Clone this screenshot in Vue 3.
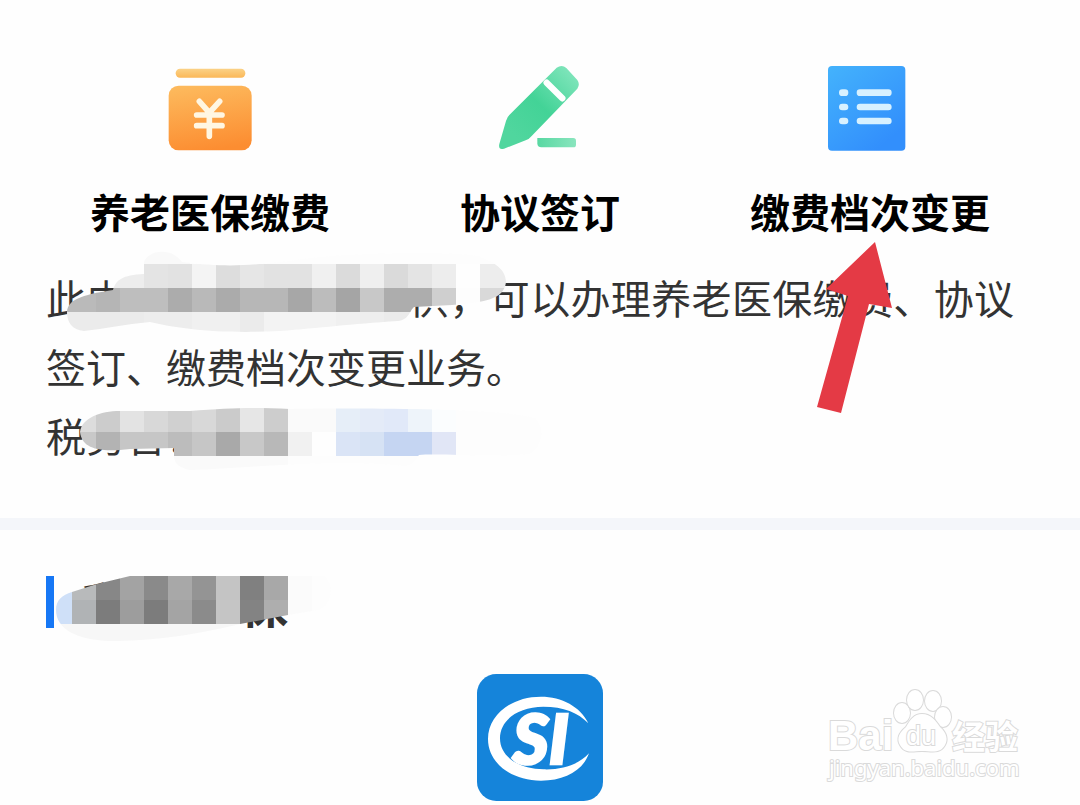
<script setup>
const cells = (y, h, list) => list.map(([x, w, fill]) => ({ x, y, w, h, fill }))

const firstMosaic = [
  ...cells(248, 16, [[130, 60, '#f9f9f9'], [190, 330, '#fdfdfd']]),
  ...cells(264, 24, [
    [60, 84, '#ededed'], [144, 24, '#e4e4e4'], [168, 24, '#e2e2e2'], [192, 24, '#f4f4f4'],
    [216, 24, '#dddddd'], [240, 24, '#e6e6e6'], [264, 48, '#e2e2e2'], [312, 24, '#f0f0f0'],
    [336, 24, '#dbdbdb'], [360, 24, '#efefef'], [384, 24, '#dadada'], [408, 24, '#e4e4e4'],
    [432, 24, '#ededed'], [456, 24, '#fefefe'], [480, 30, '#ededed'],
  ]),
  ...cells(288, 24, [
    [60, 36, '#bababa'], [96, 24, '#b5b5b5'], [120, 48, '#bebebe'], [168, 24, '#acacac'],
    [192, 24, '#b9b9b9'], [216, 24, '#ababab'], [240, 48, '#b7b7b7'], [288, 24, '#a7a7a7'],
    [312, 24, '#bcbcbc'], [336, 24, '#a5a5a5'], [360, 24, '#c8c8c8'], [384, 48, '#adadad'],
    [432, 24, '#cfcfcf'], [456, 24, '#fdfdfd'], [480, 30, '#d9d9d9'],
  ]),
  ...cells(312, 24, [
    [60, 84, '#ebebeb'], [144, 48, '#ededed'], [192, 48, '#f0f0f0'], [240, 24, '#ebebeb'],
    [264, 72, '#f3f3f3'], [336, 24, '#f0f0f0'], [360, 24, '#eeeeee'], [384, 36, '#ebebeb'],
  ]),
]

const secondMosaic = [
  ...cells(404, 28, [
    [76, 20, '#dcdcdc'], [96, 24, '#cccccc'], [120, 24, '#e3e3e3'], [144, 24, '#d8d8d8'],
    [168, 24, '#d0d0d0'], [192, 24, '#d8d8d8'], [216, 24, '#cbcbcb'], [240, 24, '#e6e6e6'],
    [264, 24, '#cdcdcd'], [288, 48, '#fafafa'], [336, 24, '#e6eef8'], [360, 24, '#e4ebf8'],
    [384, 24, '#e1e9f9'], [408, 24, '#eef4fa'], [432, 24, '#fbfdfe'], [456, 90, '#fdfdfd'],
  ]),
  ...cells(432, 24, [
    [76, 20, '#c8c8c8'], [96, 24, '#b3b3b3'], [120, 48, '#c6c6c6'], [168, 24, '#bcbcbc'],
    [192, 24, '#c6c6c6'], [216, 24, '#a9a9a9'], [240, 24, '#c8c8c8'], [264, 24, '#b8b8b8'],
    [288, 24, '#f1f1f1'], [312, 24, '#fefefe'], [336, 24, '#dae4f6'], [360, 24, '#d6e2f4'],
    [384, 48, '#c5d5f2'], [432, 24, '#e1e6f6'], [456, 90, '#fdfdfd'],
  ]),
  ...cells(456, 20, [[76, 212, '#fafafa'], [288, 130, '#fdfdfd']]),
]

const titleMosaic = [
  ...cells(566, 10, [[130, 210, '#fefefe']]),
  ...cells(576, 24, [
    [50, 22, '#cfe0f8'], [72, 24, '#b8babb'], [96, 24, '#878787'], [120, 24, '#a3a3a3'],
    [144, 24, '#8a8a8a'], [168, 24, '#a8a8a8'], [192, 24, '#949494'], [216, 24, '#c4c4c4'],
    [240, 24, '#808080'], [264, 24, '#a8a8a8'], [288, 24, '#fbfbfb'], [312, 24, '#fdfdfd'],
  ]),
  ...cells(600, 24, [
    [50, 22, '#cfe0f8'], [72, 24, '#b0b3b5'], [96, 24, '#7c7c7c'], [120, 24, '#9d9d9d'],
    [144, 24, '#7c7c7c'], [168, 24, '#a4a4a4'], [192, 24, '#8b8b8b'], [216, 24, '#c5c5c5'],
    [240, 24, '#838383'], [264, 24, '#aeaeae'], [288, 24, '#fbfbfb'], [312, 24, '#fdfdfd'],
  ]),
  ...cells(624, 20, [[50, 190, '#f7f7f7']]),
]
</script>

<template>
  <main class="page">
    <section class="services">
      <nav class="tiles">
        <a class="tile" href="#payment">
          <svg class="tile-icon" viewBox="0 45 360 276" aria-hidden="true">
            <defs>
              <linearGradient id="lid" x1="0" y1="0" x2="0" y2="1">
                <stop offset="0" stop-color="#fbd287" />
                <stop offset="1" stop-color="#fbb858" />
              </linearGradient>
              <linearGradient id="box" x1="0.3" y1="0" x2="0.5" y2="1">
                <stop offset="0" stop-color="#fdb95c" />
                <stop offset="1" stop-color="#fc8d31" />
              </linearGradient>
            </defs>
            <rect x="77" y="56" width="209" height="27" rx="13" fill="url(#lid)" />
            <rect x="56" y="107" width="249" height="194" rx="30" fill="url(#box)" />
            <path d="M148 154 L178 188 L209 154 M140 195 H216 M140 227 H216 M178 190 V259" fill="none" stroke="#fff6e2" stroke-width="17" stroke-linecap="round" />
          </svg>
          <span class="tile-label">养老医保缴费</span>
        </a>
        <a class="tile" href="#agreement">
          <svg class="tile-icon" viewBox="0 45 360 276" aria-hidden="true">
            <defs>
              <linearGradient id="pen" x1="0.9" y1="0" x2="0.15" y2="0.8">
                <stop offset="0" stop-color="#83e6bd" />
                <stop offset="0.55" stop-color="#43d397" />
                <stop offset="1" stop-color="#50d69e" />
              </linearGradient>
              <linearGradient id="line" x1="0" y1="0" x2="1" y2="0">
                <stop offset="0" stop-color="#58d8a2" />
                <stop offset="1" stop-color="#8ae5be" />
              </linearGradient>
            </defs>
            <path d="M230 53 Q246 42 259 54 L292 90 Q301 103 292 116 L155 258 Q148 267 137 271 L72 296 Q54 301 58 282 L78 213 Q81 201 91 192 Z" fill="url(#pen)" />
            <path d="M200 98 L247 145" stroke="#fff" stroke-width="19" stroke-linecap="round" />
            <path d="M172 264 H280 Q288 264 288 272 V284 Q288 292 280 292 H184 Q172 292 172 280 Z" fill="url(#line)" />
          </svg>
          <span class="tile-label">协议签订</span>
        </a>
        <a class="tile" href="#level">
          <svg class="tile-icon" viewBox="0 45 360 276" aria-hidden="true">
            <defs>
              <linearGradient id="list" x1="0.1" y1="0" x2="0.75" y2="0.9">
                <stop offset="0" stop-color="#43b1fc" />
                <stop offset="1" stop-color="#328ffc" />
              </linearGradient>
            </defs>
            <rect x="54" y="48" width="232" height="254" rx="12" fill="url(#list)" />
            <g stroke="#d7f1ff" stroke-width="20" stroke-linecap="round">
              <path d="M97 128 H105 M150 128 H235" />
              <path d="M97 171 H105 M150 171 H235" />
              <path d="M97 213 H105 M150 213 H235" />
            </g>
          </svg>
          <span class="tile-label">缴费档次变更</span>
        </a>
      </nav>

      <div class="description">
        <p>此由<span class="gap-provider"></span>供，可以办理养老医保缴费、协议签订、缴费档次变更业务。</p>
        <p>税务官：</p>
        <svg class="overlay" viewBox="46 263 968 207" width="968" height="207" aria-hidden="true">
          <defs>
            <clipPath id="smear-one">
              <path d="M67 312 C68 300 80 295 113 290 C116 280 122 275 144 274 V262 C148 250 172 247 182 262 C230 268 250 265 290 261 C340 252 450 251 478 256 C495 262 506 270 506 282 C504 300 484 302 452 305 L414 307 C410 310 409 320 398 321 C350 324 320 328 280 331 C220 334 180 329 150 322 C125 324 105 329 84 331 C72 330 67 322 67 312 Z" />
            </clipPath>
            <clipPath id="smear-two">
              <path d="M80 432 C82 418 100 411 120 411 H190 C230 408 250 407 290 409 C360 408 500 408 535 418 C546 430 542 446 530 454 C490 458 440 453 419 455 C415 460 413 465 405 466 C340 458 250 468 190 470 C180 468 174 464 174 456 V448 L130 449 C95 453 82 447 80 432 Z" />
            </clipPath>
          </defs>
          <g clip-path="url(#smear-one)" shape-rendering="crispEdges">
            <rect v-for="(c, i) in firstMosaic" :key="i" :x="c.x" :y="c.y" :width="c.w" :height="c.h" :fill="c.fill" />
          </g>
          <g clip-path="url(#smear-two)" shape-rendering="crispEdges">
            <rect v-for="(c, i) in secondMosaic" :key="i" :x="c.x" :y="c.y" :width="c.w" :height="c.h" :fill="c.fill" />
          </g>
          <path d="M875 242 L892 308 L869 304 L841 413 L817 407 L848 296 L826 289 Z" fill="#e43a45" />
        </svg>
      </div>
    </section>

    <section class="social">
      <h2 class="title">
        <span>我<span class="gap-title"></span>保</span>
        <svg class="overlay" viewBox="46 576 300 52" width="300" height="52" aria-hidden="true">
          <defs>
            <clipPath id="smear-title">
              <path d="M56 610 C56 600 62 595 72 592 L97 584 L130 576 C190 566 280 562 318 570 C336 580 334 605 318 610 L288 615 L240 624 C190 636 150 641 110 641 C75 640 56 628 56 610 Z" />
            </clipPath>
          </defs>
          <g clip-path="url(#smear-title)" shape-rendering="crispEdges">
            <rect v-for="(c, i) in titleMosaic" :key="i" :x="c.x" :y="c.y" :width="c.w" :height="c.h" :fill="c.fill" />
          </g>
        </svg>
      </h2>
      <a class="app" href="#si" aria-label="SI">
        <svg viewBox="51 42 378 381" width="126" height="127">
          <rect x="51" y="42" width="378" height="381" rx="58" fill="#1584da" />
          <path d="M385 190 C362 140 305 110 243 110 C150 110 84 168 84 237 C84 306 150 362 243 362 C315 362 370 330 387 280 C355 315 305 330 250 328 C175 326 120 290 120 235 C120 180 175 140 250 140 C310 140 355 158 385 190 Z" fill="#fff" />
          <text class="logo-text" x="158" y="311">SI</text>
        </svg>
      </a>
    </section>

    <svg class="watermark" viewBox="0 0 210 100" width="210" height="100">
      <text class="mark-latin" x="4" y="65">Bai</text>
      <g class="paw">
        <ellipse cx="78" cy="28" rx="8" ry="10" />
        <ellipse cx="91" cy="15" rx="8" ry="10" />
        <ellipse cx="109" cy="16" rx="8" ry="10" />
        <ellipse cx="119" cy="32" rx="8" ry="10" />
        <path d="M98 29 C107 29 112 36 116 42 C123 48 124 55 121 60 C116 69 108 66 98 66 C88 66 81 69 76 60 C72 53 76 47 82 42 C86 35 90 29 98 29 Z" />
      </g>
      <text class="mark-du" x="82" y="60">du</text>
      <text class="mark-cjk" x="128" y="64">经验</text>
      <text class="mark-url" x="5" y="91">jingyan.baidu.com</text>
    </svg>
  </main>
</template>

<style>
body {
  background: #fefefe;
}
</style>

<style scoped>
.page {
  position: relative;
  overflow: hidden;
  background: #fefefe;
  color: #333;
  font-family: "Noto Sans CJK SC", sans-serif;
}
.services {
  padding: 65px 45px 48px;
  border-bottom: 12px solid #f4f6fa;
}
.tiles {
  display: grid;
  grid-template-columns: repeat(3, 1fr);
}
.tile {
  display: flex;
  flex-direction: column;
  align-items: center;
  gap: 24px;
  color: #000;
  text-decoration: none;
}
.tile-icon {
  width: 120px;
  height: 92px;
}
.tile-label {
  font-size: 40px;
  font-weight: 700;
  line-height: 60px;
}
.description {
  position: relative;
  margin: 22px 21px 0 1px;
  font-size: 40px;
  line-height: 69px;
  text-align: justify;
}
.description p {
  margin: 0;
}
.gap-provider {
  display: inline-block;
  width: 282px;
}
.overlay {
  position: absolute;
  top: 0;
  left: 0;
  overflow: visible;
}
.social {
  padding: 46px 46px 4px;
}
.title {
  position: relative;
  margin: 0;
  padding-left: 28px;
  border-left: 8px solid #1677f5;
  font-size: 48px;
  line-height: 52px;
}
.title .overlay {
  left: -8px;
}
.gap-title {
  display: inline-block;
  width: 110px;
}
.app {
  display: block;
  width: 126px;
  margin: 46px auto 0;
}
.app svg {
  display: block;
}
.logo-text {
  fill: #fff;
  stroke: #fff;
  stroke-width: 8px;
  font-family: Lato, sans-serif;
  font-size: 208px;
  font-weight: 900;
  font-style: italic;
}
.watermark {
  position: absolute;
  right: 46px;
  bottom: 20px;
  fill: #fff;
  stroke: #dadada;
  stroke-width: 2px;
  paint-order: stroke;
}
.mark-latin {
  font: 700 42px "Liberation Sans", sans-serif;
}
.mark-du {
  font: 400 27px "Liberation Sans", sans-serif;
}
.mark-cjk {
  font: 700 33px "Noto Sans CJK SC", sans-serif;
}
.mark-url {
  font: 400 22px "Noto Sans", sans-serif;
}
</style>
